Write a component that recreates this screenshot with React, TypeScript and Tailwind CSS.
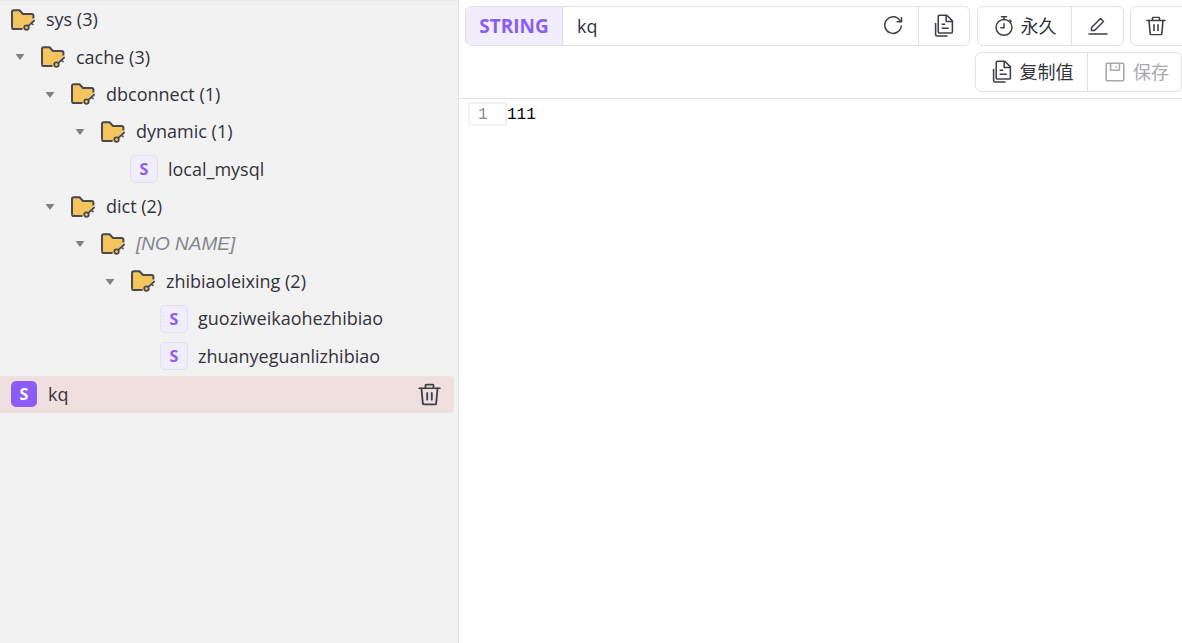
import React from "react";

const font = { fontFamily: '"Open Sans","Noto Sans CJK SC",sans-serif' };

function FolderKey() {
  return (
    <svg width="26" height="22" viewBox="0 0 26 22" fill="none" className="shrink-0">
      <path d="M2 3C2 2 2.800 1.200 3.800 1.200H9.500L13 5H21.600C22.700 5 23.400 5.800 23.400 6.800V10.500L13.500 20H3.800C2.800 20 2 19.200 2 18.200Z" fill="#f5c45e" />
      <path d="M2 18.200V3C2 2 2.800 1.200 3.800 1.200H9.500L13 5H21.600C22.700 5 23.400 5.800 23.400 6.800V9.500" stroke="#48484e" strokeWidth="2" strokeLinejoin="round" />
      <path d="M2 18.200C2 19.200 2.800 20 3.800 20H12.500" stroke="#48484e" strokeWidth="2" />
      <circle cx="16.500" cy="18.600" r="2.300" fill="#f5c45e" stroke="#48484e" strokeWidth="1.700" />
      <path d="M18.200 17 24.200 11.500M21.500 14l1.500 1.500" stroke="#48484e" strokeWidth="1.700" strokeLinecap="round" />
    </svg>
  );
}

function Caret() {
  return (
    <svg width="10" height="6" viewBox="0 0 10 6" className="shrink-0">
      <path d="M0.500 0h9L5 6Z" fill="#7f8087" />
    </svg>
  );
}

function CopyDoc() {
  return (
    <svg width="24" height="24" viewBox="0 0 20 20" fill="none" stroke="#3f3f46" strokeWidth="1.300" strokeLinejoin="round" className="shrink-0">
      <path d="M5.200 14.700V2.200c0-.7.500-1.200 1.200-1.200h5.900L17 5.700v9c0 .7-.5 1.200-1.200 1.200H6.400c-.7 0-1.200-.5-1.200-1.200Z" />
      <path d="M11.800 1v5.200H17" />
      <path d="M8 8.500h3M8 11.800h6" />
      <path d="M3 7.500v9.500c0 .7.500 1.300 1.200 1.300h8.800" />
    </svg>
  );
}

function Timer() {
  return (
    <svg width="22" height="22" viewBox="0 0 20 20" fill="none" stroke="#3f3f46" strokeWidth="1.350" strokeLinecap="round" className="shrink-0">
      <circle cx="10" cy="11.300" r="7.200" />
      <path d="M7.700 1.500h4.600M10 1.500v2.600M10 8v3.600H7.200" />
      <path d="M15.300 4.600l1.200 1.200" />
    </svg>
  );
}

function Pen() {
  return (
    <svg width="20" height="20" viewBox="0 0 20 20" fill="none" stroke="#3f3f46" strokeWidth="1.500" strokeLinejoin="round" strokeLinecap="round" className="shrink-0">
      <path d="M3.500 14.500v-3L12.500 2.500l3 3-9 9Z" />
      <path d="M1 18h18" />
    </svg>
  );
}

function Refresh() {
  return (
    <svg width="20" height="20" viewBox="0 0 20 20" fill="none" stroke="#3f3f46" strokeWidth="1.500" strokeLinecap="round" strokeLinejoin="round" className="shrink-0">
      <path d="M17 4.500A8.300 8.300 0 1 0 18.300 10" />
      <path d="M18.500 1.500v4.300h-4.300" />
    </svg>
  );
}

function Trash({ w = 20, h = 20 }: { w?: number; h?: number }) {
  return (
    <svg width={w} height={h} viewBox="0 0 20 22" fill="none" preserveAspectRatio="none" stroke="#3f3f46" strokeWidth="1.600" strokeLinecap="round" strokeLinejoin="round" className="shrink-0">
      <path d="M1 5h18M6.500 5V2.300c0-.5.400-.8.800-.8h5.400c.4 0 .8.300.8.800V5" />
      <path d="M3 5l1.200 14.500c0 .6.500 1 1.100 1h9.400c.6 0 1.100-.4 1.100-1L17 5" />
      <path d="M8 9.500v6.500M12 9.500v6.500" />
    </svg>
  );
}

function Save() {
  return (
    <svg width="22" height="22" viewBox="0 0 20 20" fill="none" stroke="#a8a8ad" strokeWidth="1.400" strokeLinejoin="round" className="shrink-0">
      <rect x="2" y="2" width="16" height="16" rx="1" />
      <path d="M6 2v6.500h8V2M11 4.500V6" />
    </svg>
  );
}

type Row = { label: string; level: number; kind: "folder" | "key"; italic?: boolean };

const rows: Row[] = [
  { label: "sys (3)", level: 0, kind: "folder" },
  { label: "cache (3)", level: 1, kind: "folder" },
  { label: "dbconnect (1)", level: 2, kind: "folder" },
  { label: "dynamic (1)", level: 3, kind: "folder" },
  { label: "local_mysql", level: 4, kind: "key" },
  { label: "dict (2)", level: 2, kind: "folder" },
  { label: "[NO NAME]", level: 3, kind: "folder", italic: true },
  { label: "zhibiaoleixing (2)", level: 4, kind: "folder" },
  { label: "guoziweikaohezhibiao", level: 5, kind: "key" },
  { label: "zhuanyeguanlizhibiao", level: 5, kind: "key" },
];

function TreeRow({ row }: { row: Row }) {
  const pad = row.level * 30;
  if (row.kind === "key") {
    return (
      <div className="flex h-[37.400px] items-center" style={{ paddingLeft: pad + 10 }}>
        <span className="flex h-[28px] w-[28px] shrink-0 items-center justify-center rounded-[5px] border border-[#e4e0f2] bg-[#f1edfc] text-[16px] font-bold text-[#8b5cf6]">S</span>
        <span className="ml-[10px] text-[18px] text-[#33333b]">{row.label}</span>
      </div>
    );
  }
  return (
    <div className="relative flex h-[37.400px] items-center" style={{ paddingLeft: pad + 10 }}>
      {row.level > 0 && (
        <span className="absolute top-[16px]" style={{ left: pad - 15 }}>
          <Caret />
        </span>
      )}
      <FolderKey />
      {row.italic ? (
        <span className="ml-[10px] font-['Liberation_Sans'] text-[19px] italic text-[#85858c]">{row.label}</span>
      ) : (
        <span className="ml-[10px] text-[18px] text-[#33333b]">{row.label}</span>
      )}
    </div>
  );
}

export default function App() {
  return (
    <div className="flex h-[643px] w-[1182px] overflow-hidden bg-white" style={font}>
      <aside className="h-full w-[459px] shrink-0 border-r border-[#e3e3e6] bg-[#f2f2f2] pt-[1px] shadow-[inset_0_1px_0_#e9e9ec]">
        {rows.map((r) => (
          <TreeRow key={r.label} row={r} />
        ))}
        <div className="mt-[1px] flex h-[37px] w-[454px] items-center rounded-r-[4px] bg-[#efdfdf] pl-[11px] pr-[13px]">
          <span className="flex h-[26px] w-[26px] shrink-0 items-center justify-center rounded-[5px] bg-[#8b5cf6] text-[16px] font-bold text-white">S</span>
          <span className="ml-[11px] flex-1 text-[18px] text-[#33333b]">kq</span>
          <Trash w={23} h={23} />
        </div>
      </aside>

      <main className="flex min-w-0 flex-1 flex-col">
        <div className="h-[99px] shrink-0 border-b border-[#e0e0e6]">
          <div className="flex h-[52px] items-start pl-[6px] pt-[6px]">
            <div className="flex h-[40px] w-[505px] shrink-0 overflow-hidden rounded-[6px] border border-[#e0e0e6]">
              <span className="flex w-[97px] shrink-0 items-center justify-center border-r border-[#e0e0e6] bg-[#f1edfc] text-[19px] font-bold text-[#8b5cf6]">STRING</span>
              <span className="flex flex-1 items-center pl-[14px] text-[18px] text-[#33333b]">kq</span>
              <span className="flex w-[51px] shrink-0 items-center justify-center"><Refresh /></span>
              <span className="flex w-[51px] shrink-0 items-center justify-center border-l border-[#e0e0e6]"><CopyDoc /></span>
            </div>
            <div className="ml-[7px] flex h-[40px] w-[147px] shrink-0 overflow-hidden rounded-[6px] border border-[#e0e0e6]">
              <span className="flex w-[93px] items-center justify-center gap-[6px] text-[18px] text-[#33333b]"><Timer />永久</span>
              <span className="flex flex-1 items-center justify-center border-l border-[#e0e0e6]"><Pen /></span>
            </div>
            <div className="ml-[6px] flex h-[40px] w-[60px] shrink-0 items-center justify-center rounded-[6px] border border-[#e0e0e6] pr-[8px]">
              <Trash />
            </div>
          </div>
          <div className="flex h-[40px] justify-end">
            <div className="flex h-[40px] w-[207px] shrink-0 overflow-hidden rounded-[6px] border border-[#e0e0e6]">
              <span className="flex w-[112px] items-center justify-center gap-[6px] border-r border-[#e0e0e6] text-[18px] text-[#33333b]"><CopyDoc />复制值</span>
              <span className="flex flex-1 items-center justify-center gap-[7px] pl-[4px] text-[18px] text-[#a8a8ad]"><Save />保存</span>
            </div>
          </div>
        </div>
        <div className="flex pl-[9px] pt-[3px] text-[16px] leading-[24px]" style={{ fontFamily: '"Liberation Mono",monospace' }}>
          <span className="box-border flex h-[24px] w-[39px] items-center border-2 border-[#f2f2f2] pl-[8px] pt-[2px] text-[#8a8a8a]">1</span>
          <span className="pt-[1px] text-black">111</span>
        </div>
      </main>
    </div>
  );
}
